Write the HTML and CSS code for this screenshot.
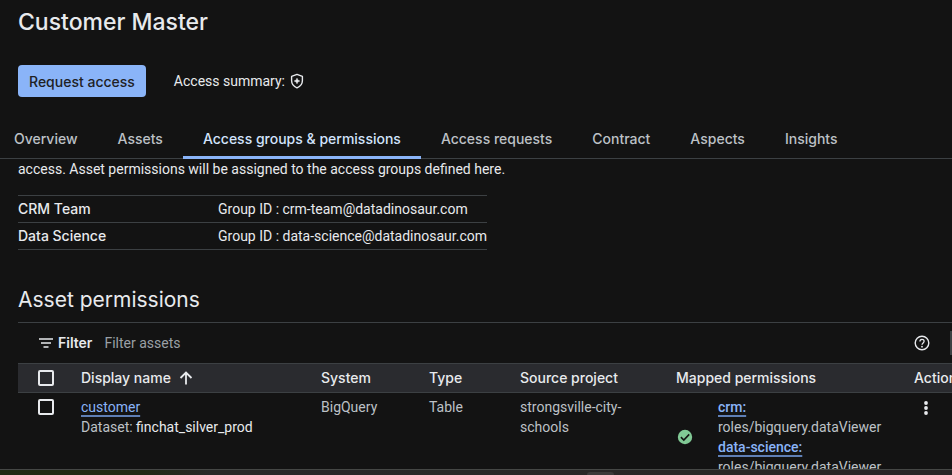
FILE: index.html
```html
<!DOCTYPE html>
<html lang="en">
<head>
  <meta charset="UTF-8" />
  <meta name="viewport" content="width=device-width, initial-scale=1.0"/>
  <title>Customer Master</title>
  <link rel="stylesheet" href="styles.css">
</head>
<body>

  <!-- Header -->
  <header class="header">
    <h1>Customer Master</h1>
    <div class="header-actions">
      <button class="btn" type="button">Request access</button>
      <div class="summary">
        <span>Access summary:</span>
        <svg class="shield" viewBox="0 0 16 18" role="img" aria-label="Access level">
          <path d="M8 2.4 L13.4 4.4 V8.6 C13.4 12 11.2 14.6 8 15.8 C4.8 14.6 2.6 12 2.6 8.6 V4.4 Z" fill="none" stroke="currentColor" stroke-width="1.4" stroke-linejoin="round"/>
          <path d="M8 6.2 L8.9 8.1 L10.8 9 L8.9 9.9 L8 11.8 L7.1 9.9 L5.2 9 L7.1 8.1 Z" fill="currentColor" stroke="currentColor" stroke-width="0.5"/>
        </svg>
      </div>
    </div>
  </header>

  <!-- Tabs -->
  <nav class="tabs">
    <a href="#overview" class="tab">Overview</a>
    <a href="#assets" class="tab">Assets</a>
    <a href="#access" class="tab active">Access groups &amp; permissions</a>
    <a href="#requests" class="tab">Access requests</a>
    <a href="#contract" class="tab">Contract</a>
    <a href="#aspects" class="tab">Aspects</a>
    <a href="#insights" class="tab">Insights</a>
  </nav>

  <main class="content">
    <p>access. Asset permissions will be assigned to the access groups defined here.</p>

    <table class="groups">
      <tr>
        <th scope="row">CRM Team</th>
        <td>Group ID : crm-team@datadinosaur.com</td>
      </tr>
      <tr>
        <th scope="row">Data Science</th>
        <td>Group ID : data-science@datadinosaur.com</td>
      </tr>
    </table>

    <h2>Asset permissions</h2>

    <!-- Filter bar -->
    <div class="filter-bar">
      <svg class="filter-icon" viewBox="0 0 16 12" aria-hidden="true">
        <path d="M1 2 H15 M3 6 H13 M5.5 10 H10.5" stroke="currentColor" stroke-width="1.7"/>
      </svg>
      <label for="filter">Filter</label>
      <input type="text" id="filter" placeholder="Filter assets" />
      <button class="icon-btn help" type="button" aria-label="Help">
        <svg viewBox="0 0 16 16">
          <circle cx="8" cy="8" r="6.8" fill="none" stroke="currentColor" stroke-width="1.4"/>
          <path d="M5.9 6.6 C5.9 3.6 10.1 3.7 10.1 6.3 C10.1 7.9 8 7.9 8 9.8" fill="none" stroke="currentColor" stroke-width="1.3"/>
          <circle cx="8" cy="11.7" r="0.9" fill="currentColor"/>
        </svg>
      </button>
      <span class="divider"></span>
    </div>

    <!-- Assets table -->
    <table class="assets">
      <colgroup>
        <col class="col-check">
        <col class="col-name">
        <col class="col-system">
        <col class="col-type">
        <col class="col-source">
        <col class="col-mapped">
        <col class="col-action">
      </colgroup>
      <thead>
        <tr>
          <th><input type="checkbox" aria-label="Select all" /></th>
          <th>
            <span class="sort">Display name
              <svg viewBox="0 0 14 14" aria-hidden="true">
                <path d="M7 13.5 V1.5 M1.5 7 L7 1.5 L12.5 7" fill="none" stroke="currentColor" stroke-width="1.8"/>
              </svg>
            </span>
          </th>
          <th>System</th>
          <th>Type</th>
          <th>Source project</th>
          <th>Mapped permissions</th>
          <th>Actions</th>
        </tr>
      </thead>
      <tbody>
        <tr>
          <td><input type="checkbox" aria-label="Select customer" /></td>
          <td>
            <a href="#customer">customer</a><br>
            Dataset: <span class="light">finchat_silver_prod</span>
          </td>
          <td>BigQuery</td>
          <td>Table</td>
          <td>strongsville-city-schools</td>
          <td>
            <div class="mapped">
              <svg class="check" viewBox="0 0 16 16" role="img" aria-label="Granted">
                <circle cx="8" cy="8" r="7.2" fill="#81c995"/>
                <path d="M3.9 8.2 L6.8 11 L12.2 5.4" fill="none" stroke="#131313" stroke-width="1.6"/>
              </svg>
              <div>
                <a class="strong" href="#crm">crm:</a><br>
                roles/bigquery.dataViewer<br>
                <a class="strong" href="#data-science">data-science:</a><br>
                roles/bigquery.dataViewer
              </div>
            </div>
          </td>
          <td>
            <button class="icon-btn more" type="button" aria-label="More actions">
              <svg viewBox="0 0 4 14">
                <circle cx="2" cy="2" r="1.9" fill="currentColor"/>
                <circle cx="2" cy="7" r="1.9" fill="currentColor"/>
                <circle cx="2" cy="12" r="1.9" fill="currentColor"/>
              </svg>
            </button>
          </td>
        </tr>
      </tbody>
    </table>
  </main>

  <div class="bottom-bar"><span class="handle"></span></div>

</body>
</html>
```
FILE: styles.css
```css
* {
  box-sizing: border-box;
}

body {
  margin: 0;
  height: 100vh;
  display: flex;
  flex-direction: column;
  overflow: hidden;
  background: #131313;
  color: #e8eaed;
  font-family: Roboto, sans-serif;
  font-size: 14px;
  line-height: 20px;
}

h1,
h2 {
  margin: 0;
  font-family: "Google Sans", Inter, sans-serif;
  font-size: 21px;
  font-weight: 400;
  line-height: 28px;
}

h1 {
  font-size: 23px;
  font-weight: 500;
}

.header {
  padding: 8px 18px 0;
}

.header-actions {
  display: flex;
  align-items: center;
  gap: 28px;
  margin-top: 29px;
}

.btn {
  height: 32px;
  padding: 0 11px;
  border: none;
  border-radius: 4px;
  background: #8ab4f8;
  color: #202124;
  font-family: "Google Sans", Inter, sans-serif;
  font-size: 14px;
  font-weight: 500;
  cursor: pointer;
}

.summary {
  display: flex;
  align-items: center;
  gap: 4px;
}

.shield {
  width: 16px;
  height: 18px;
}

.tabs {
  display: flex;
  flex-shrink: 0;
  margin-top: 24px;
  border-bottom: 1px solid #3c4043;
}

.tab {
  padding: 8px 20px 7px;
  margin-bottom: -1px;
  border-bottom: 3px solid transparent;
  color: #bdc1c6;
  font-family: "Google Sans", Inter, sans-serif;
  font-weight: 500;
  text-decoration: none;
  white-space: nowrap;
}

.tab:first-child {
  padding-left: 14px;
}

.tab.active {
  color: #d2e3fc;
  border-bottom-color: #8ab4f8;
}

.content {
  flex: 1;
  min-height: 0;
  padding-left: 18px;
  overflow: hidden;
}

.content p {
  margin: 0 0 16px;
}

table {
  border-collapse: collapse;
}

th {
  font-family: "Google Sans", Inter, sans-serif;
  font-weight: 500;
  text-align: left;
}

.groups {
  border-top: 1px solid #3c4043;
}

.groups tr {
  border-bottom: 1px solid #3c4043;
}

.groups th,
.groups td {
  padding: 3px 0;
}

.groups th {
  width: 200px;
}

h2 {
  margin-top: 36px;
}

.filter-bar {
  display: flex;
  align-items: center;
  height: 41px;
  margin-top: 8px;
  padding-left: 20px;
  border-top: 1px solid #3c4043;
}

.filter-icon {
  width: 16px;
  height: 12px;
  margin-right: 4px;
}

.filter-bar label {
  font-family: "Google Sans", Inter, sans-serif;
  font-weight: 600;
}

.filter-bar input {
  flex: 1;
  margin-left: 12px;
  padding: 0;
  border: none;
  outline: none;
  background: none;
  color: #e8eaed;
  font: inherit;
}

.filter-bar input::placeholder {
  color: #9aa0a6;
}

.icon-btn {
  display: flex;
  padding: 0;
  border: none;
  background: none;
  color: #e8eaed;
  cursor: pointer;
}

.help svg {
  width: 16px;
  height: 16px;
}

.divider {
  width: 2px;
  height: 24px;
  margin-left: 20px;
  background: #3c4043;
}

/* wider than the viewport, the last column runs off */
.assets {
  width: 100%;
  min-width: 1020px;
  table-layout: fixed;
  color: #bdc1c6;
}

.col-check { width: 63px; }
.col-name { width: 240px; }
.col-system { width: 108px; }
.col-type { width: 91px; }
.col-source { width: 156px; }
.col-mapped { width: 238px; }

.assets th,
.assets td {
  padding: 4px 0;
  vertical-align: top;
}

.assets td:nth-child(5) {
  padding-right: 40px;
}

.assets thead tr {
  border-top: 1px solid #3c4043;
  border-bottom: 1px solid #3c4043;
  background: #2a2b2f;
  color: #e8eaed;
}

.assets input {
  display: block;
  appearance: none;
  width: 16px;
  height: 16px;
  margin: 2px 0 2px 20px;
  border: 2px solid #e8eaed;
  border-radius: 2px;
}

.sort {
  display: flex;
  align-items: center;
  gap: 8px;
}

.sort svg {
  width: 14px;
  height: 14px;
}

.assets a {
  color: #8ab4f8;
  text-decoration: underline 2px #5f7fb5;
  text-underline-offset: 3px;
  text-decoration-skip-ink: none;
}

.assets .strong {
  font-weight: 500;
}

.light {
  color: #e8eaed;
}

.mapped {
  display: flex;
  align-items: center;
  gap: 25px;
}

.check {
  width: 16px;
  height: 16px;
  margin-left: 1px;
}

.more {
  padding: 4px 10px;
}

.more svg {
  width: 4px;
  height: 14px;
}

.bottom-bar {
  display: flex;
  justify-content: center;
  flex-shrink: 0;
  height: 6px;
  padding-left: 248px;
  border-top: 1px solid #454745;
  background: linear-gradient(to right, #1f2a12, #222a14 15%, #292827 22%, #292526);
}

.handle {
  width: 27px;
  height: 3px;
  margin-top: 2px;
  border-radius: 3px 3px 0 0;
  background: #3c3a3a;
}
```
